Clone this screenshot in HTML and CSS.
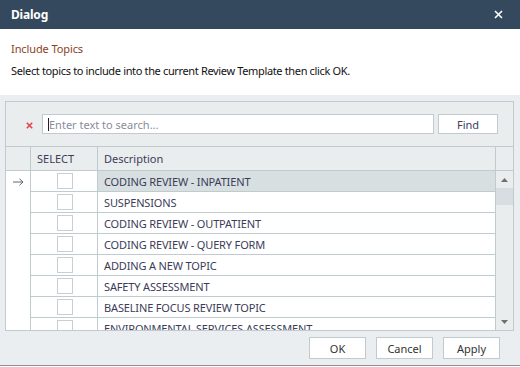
FILE: index.html
```html
<!DOCTYPE html>
<html>
<head>
<meta charset="utf-8">
<link rel="stylesheet" href="styles.css">
</head>
<body>
<div class="dialog">
  <div class="titlebar">
    <span class="title">Dialog</span>
    <svg class="close" width="9" height="9" viewBox="0 0 9 9"><path d="M1 1L8 8M8 1L1 8" stroke="#fff" stroke-width="1.6"/></svg>
  </div>
  <div class="intro">
    <div class="heading">Include Topics</div>
    <div class="desc">Select topics to include into the current Review Template then click OK.</div>
  </div>
  <div class="content">
    <div class="panel">
      <div class="search">
        <svg class="clear" width="7" height="7" viewBox="0 0 7 7"><path d="M0.8 0.8L6.2 6.2M6.2 0.8L0.8 6.2" stroke="#e2454a" stroke-width="1.6"/></svg>
        <div class="input"><span class="caret"></span><span class="ph">Enter text to search...</span></div>
        <div class="btn find">Find</div>
      </div>
      <div class="grid">
        <div class="head">
          <div class="c-ind"></div>
          <div class="c-sel">SELECT</div>
          <div class="c-desc">Description</div>
          <div class="c-scr"></div>
        </div>
        <div class="body">
          <div class="rows">
            <div class="row current"><div class="c-ind"><svg width="11" height="8" viewBox="0 0 11 8"><path d="M0 4H10M6.5 0.8L10 4L6.5 7.2" stroke="#5b6b80" stroke-width="1" fill="none"/></svg></div><div class="c-sel"><span class="cb"></span></div><div class="c-desc">CODING REVIEW - INPATIENT</div></div>
            <div class="row"><div class="c-ind"></div><div class="c-sel"><span class="cb"></span></div><div class="c-desc">SUSPENSIONS</div></div>
            <div class="row"><div class="c-ind"></div><div class="c-sel"><span class="cb"></span></div><div class="c-desc">CODING REVIEW - OUTPATIENT</div></div>
            <div class="row"><div class="c-ind"></div><div class="c-sel"><span class="cb"></span></div><div class="c-desc">CODING REVIEW - QUERY FORM</div></div>
            <div class="row"><div class="c-ind"></div><div class="c-sel"><span class="cb"></span></div><div class="c-desc">ADDING A NEW TOPIC</div></div>
            <div class="row"><div class="c-ind"></div><div class="c-sel"><span class="cb"></span></div><div class="c-desc">SAFETY ASSESSMENT</div></div>
            <div class="row"><div class="c-ind"></div><div class="c-sel"><span class="cb"></span></div><div class="c-desc">BASELINE FOCUS REVIEW TOPIC</div></div>
            <div class="row"><div class="c-ind"></div><div class="c-sel"><span class="cb"></span></div><div class="c-desc">ENVIRONMENTAL SERVICES ASSESSMENT</div></div>
          </div>
          <div class="scrollbar">
            <div class="arrow"><svg width="7" height="4" viewBox="0 0 7 4"><path d="M0 4L3.5 0L7 4Z" fill="#707070"/></svg></div>
            <div class="thumb"></div>
            <div class="track"></div>
            <div class="arrow"><svg width="7" height="4" viewBox="0 0 7 4"><path d="M0 0L3.5 4L7 0Z" fill="#707070"/></svg></div>
          </div>
        </div>
      </div>
    </div>
    <div class="footer">
      <div class="btn">OK</div>
      <div class="btn">Cancel</div>
      <div class="btn">Apply</div>
    </div>
  </div>
  <div class="edge"></div>
</div>
</body>
</html>
```
FILE: styles.css
```css
* { box-sizing: border-box; }
html, body { margin: 0; padding: 0; }
body {
  width: 520px;
  height: 367px;
  overflow: hidden;
  background: #ebeef0;
  font-family: "Noto Sans", "Open Sans", sans-serif;
  font-size: 11px;
  color: #3c3c58;
}
.dialog { display: flex; flex-direction: column; height: 367px; }
.titlebar {
  height: 29px;
  background: #35495e;
  display: flex;
  align-items: center;
  justify-content: space-between;
  padding: 0 17px 0 11px;
}
.title { color: #fff; font-weight: bold; font-size: 12px; letter-spacing: -0.2px; }
.close { display: block; }
.intro {
  background: #fff;
  height: 66px;
  padding: 12px 11px 0;
}
.heading { color: #8b3f1c; line-height: 16px; letter-spacing: -0.1px; }
.desc { color: #111; line-height: 16px; margin-top: 6px; letter-spacing: -0.35px; }
.content {
  flex: 1;
  padding: 6px 6px 0 5px;
  display: flex;
  flex-direction: column;
}
.panel {
  height: 230px;
  border: 1px solid #bfcbce;
  background: #e9edee;
  display: flex;
  flex-direction: column;
}
.search {
  height: 44px;
  display: flex;
  align-items: flex-start;
  padding-top: 12px;
}
.clear { margin: 8px 0 0 20px; }
.input {
  margin-left: 9px;
  width: 392px;
  height: 20px;
  background: #fff;
  border: 1px solid #bfcbce;
  display: flex;
  align-items: center;
  padding-left: 5px;
}
.caret { width: 1px; height: 13px; background: #222; }
.ph { color: #8a8c9c; }
.btn {
  width: 57px;
  height: 22px;
  background: #fff;
  border: 1px solid #bfcbce;
  display: flex;
  align-items: center;
  justify-content: center;
  color: #333;
}
.find { width: 60px; height: 20px; margin-left: 4px; color: #3c3c58; }
.grid { flex: 1; display: flex; flex-direction: column; min-height: 0; }
.head {
  height: 25px;
  display: flex;
  border-top: 1px solid #bfcbce;
  border-bottom: 1px solid #bfcbce;
}
.head > div { border-right: 1px solid #bfcbce; display: flex; align-items: center; }
.c-ind { width: 25px; flex: none; }
.c-sel { width: 67px; flex: none; }
.c-desc { flex: 1; }
.head .c-sel { padding-left: 6px; }
.head .c-desc { padding-left: 6px; }
.head .c-scr { width: 17px; border-right: none; }
.body { flex: 1; display: flex; min-height: 0; }
.rows { flex: 1; overflow: hidden; background: #fff; }
.row { display: flex; height: 21px; }
.row > div { display: flex; align-items: center; border-right: 1px solid #bfcbce; }
.row .c-sel, .row .c-desc { border-bottom: 1px solid #bfcbce; }
.row .c-ind { justify-content: center; padding-left: 1px; }
.row .c-sel { justify-content: center; padding-left: 2px; }
.row .c-desc { padding-left: 6px; white-space: nowrap; letter-spacing: -0.15px; }
.row.current .c-desc { background: #d7dfe1; }
.cb { width: 16px; height: 16px; border: 1px solid #c6cfd2; background: #fff; }
.scrollbar { width: 17px; display: flex; flex-direction: column; background: #e9edee; }
.arrow { height: 17px; display: flex; align-items: center; justify-content: center; }
.thumb { height: 17px; background: #d7dde0; }
.track { flex: 1; }
.footer {
  flex: 1;
  display: flex;
  justify-content: flex-end;
  gap: 10px;
  padding: 6px 14px 0 0;
}
.edge { height: 2px; border-top: 1px solid #8e9193; background: #fff; }
```
